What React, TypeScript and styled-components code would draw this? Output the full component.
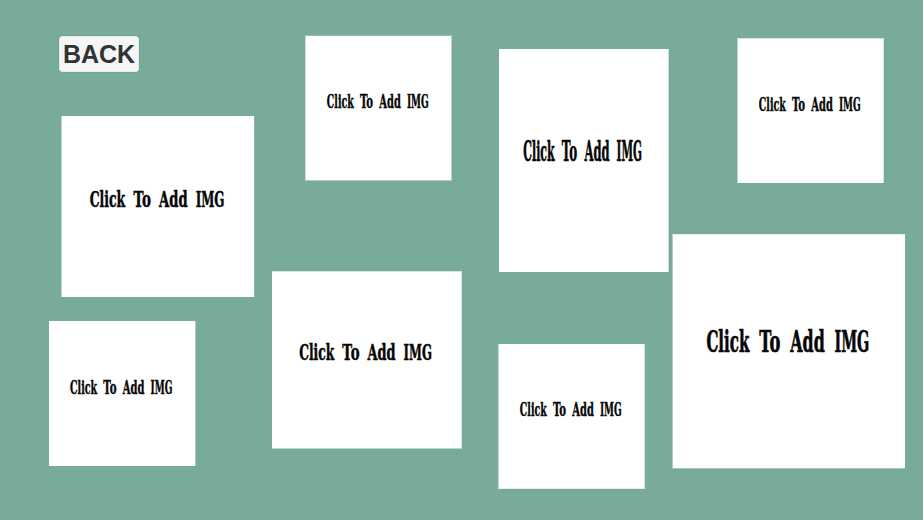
import React from "react";
import styled, { createGlobalStyle } from "styled-components";

const GlobalStyle = createGlobalStyle`
  body {
    margin: 0;
    background: #79ab9c;
    overflow: hidden;
  }
`;

const Board = styled.main`
  position: relative;
  box-sizing: border-box;
  width: 923px;
  height: 520px;
  padding: 36px 0 0 59px;
  background: #79ab9c;
`;

const BackButton = styled.button`
  display: flex;
  align-items: center;
  justify-content: center;
  box-sizing: border-box;
  width: 80px;
  height: 36px;
  padding: 0;
  border: 1px solid #e6ebe9;
  border-radius: 3px;
  background: #f5f5f5;
  box-shadow: 0 0 1px rgba(60, 90, 80, 0.8);
  color: #323232;
  font: bold 25px/34px "Liberation Sans", Arial, sans-serif;
  white-space: nowrap;
  cursor: pointer;
`;

/* Opacity of the one-pixel soft rim: top, right, bottom, left. */
type Rim = [number, number, number, number];

interface Slot {
  x: number;
  y: number;
  w: number;
  h: number;
  rim: Rim;
}

const ImageCard = styled.button<{ $slot: Slot }>`
  position: absolute;
  left: ${({ $slot }) => $slot.x}px;
  top: ${({ $slot }) => $slot.y}px;
  display: block;
  box-sizing: border-box;
  width: ${({ $slot }) => $slot.w}px;
  height: ${({ $slot }) => $slot.h}px;
  padding: 0;
  border-style: solid;
  border-width: ${({ $slot }) => $slot.rim.map((a) => (a ? "1px" : "0")).join(" ")};
  border-color: ${({ $slot }) => $slot.rim.map((a) => `rgba(255, 255, 255, ${a})`).join(" ")};
  background: #fff;
  background-clip: padding-box;
  cursor: pointer;
`;

const Caption = styled.svg`
  display: block;
  width: 100%;
  height: 100%;
  fill: #060606;
  stroke: #060606;
  stroke-width: 0.6px;
  font: bold 25px "DejaVu Serif", "Liberation Serif", serif;
`;

/* Horizontal condensing applied to the caption lettering. */
const CONDENSE = 0.515;

const words = [
  { text: "Click", x: 28.8, width: 37 },
  { text: "To", x: 74.4, width: 18.2 },
  { text: "Add", x: 101.1, width: 29.7 },
  { text: "IMG", x: 139.2, width: 30.1 },
];

const slots: Slot[] = [
  { x: 61, y: 116, w: 194, h: 181, rim: [0, 0.15, 0, 0.5] },
  { x: 305, y: 35, w: 147, h: 146, rim: [0.2, 0.5, 0.4, 0.6] },
  { x: 499, y: 49, w: 170, h: 223, rim: [0, 0.6, 0, 0] },
  { x: 737, y: 38, w: 147, h: 145, rim: [0.7, 0.7, 0, 0.5] },
  { x: 49, y: 321, w: 147, h: 145, rim: [0, 0.4, 0, 0] },
  { x: 272, y: 271, w: 190, h: 178, rim: [0.7, 0.7, 0.5, 0] },
  { x: 498, y: 344, w: 147, h: 145, rim: [0, 0.7, 0.8, 0.6] },
  { x: 672, y: 234, w: 233, h: 235, rim: [0.8, 0, 0.3, 0.4] },
];

function Placeholder({ slot }: { slot: Slot }) {
  return (
    <ImageCard type="button" $slot={slot}>
      <Caption viewBox="0 0 200 200" preserveAspectRatio="none">
        <text y="100.3" transform={`scale(${CONDENSE} 1)`}>
          {words.map((word) => (
            <tspan
              key={word.text}
              x={word.x / CONDENSE}
              textLength={word.width / CONDENSE}
              lengthAdjust="spacingAndGlyphs"
            >
              {word.text}
            </tspan>
          ))}
        </text>
      </Caption>
    </ImageCard>
  );
}

export default function App() {
  return (
    <>
      <GlobalStyle />
      <Board>
        <BackButton type="button">BACK</BackButton>
        {slots.map((slot) => (
          <Placeholder key={`${slot.x}-${slot.y}`} slot={slot} />
        ))}
      </Board>
    </>
  );
}
